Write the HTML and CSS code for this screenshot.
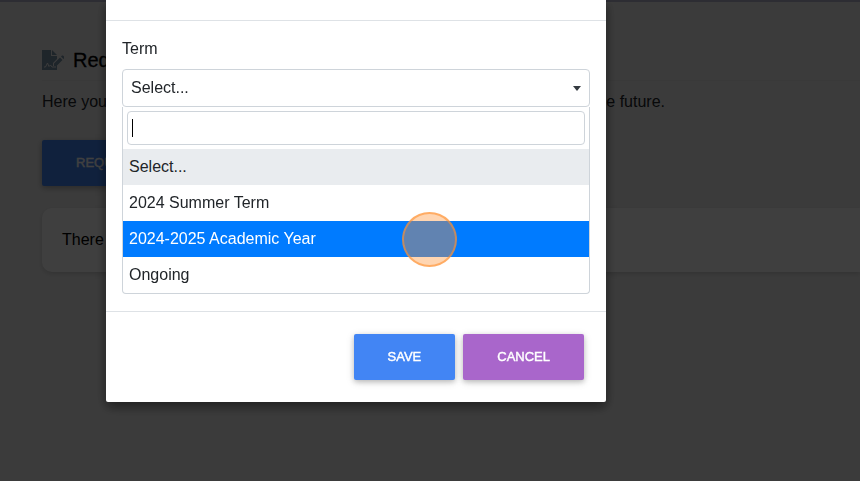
FILE: index.html
```
<!DOCTYPE html>
<html lang="en">
<head>
<meta charset="utf-8">
<meta name="viewport" content="width=device-width, initial-scale=1.0">
<title>Requests</title>
<link rel="stylesheet" href="styles.css">
</head>
<body>
<main class="page">
  <h1 class="page-title">
    <svg class="title-icon" viewBox="0 0 22 20" aria-hidden="true">
      <path fill="currentColor" d="M0 0h9v6h6v3l-4 4v3h3l1-1v5H0z"/>
      <path fill="currentColor" d="M10 0l5 5h-5z"/>
      <path fill="currentColor" d="M12 13.500l6-6 2.500 2.500-6 6H12zM19 6.500l1-1h1l1.500 1.500v1l-1 1z"/>
      <path class="signature" d="M2 17h1.500l2-4 1.500 3.500 1.500-1.500 1.500 2h4"/>
    </svg>
    Req
  </h1>
  <p class="intro"><span>Here you</span> <span>e future.</span></p>
  <button class="btn btn-blue btn-page" type="button">REQU</button>
  <section class="card">There</section>
</main>
<div class="backdrop">
  <form class="modal" role="dialog" aria-label="Term">
    <div class="modal-header"></div>
    <div class="modal-body">
      <label for="term">Term</label>
      <div class="picker">
        <button class="picker-toggle" id="term" type="button">Select...<span class="caret"></span></button>
        <div class="dropdown">
          <div class="search"><input type="text" aria-label="Search terms" autofocus><span class="text-cursor"></span></div>
          <ul class="options" role="listbox">
            <li class="selected" role="option">Select...</li>
            <li role="option">2024 Summer Term</li>
            <li class="active" role="option">2024-2025 Academic Year<span class="click-mark"></span></li>
            <li role="option">Ongoing</li>
          </ul>
        </div>
      </div>
    </div>
    <div class="modal-footer">
      <button class="btn btn-blue" type="button">SAVE</button>
      <button class="btn btn-purple" type="button">CANCEL</button>
    </div>
  </form>
</div>
</body>
</html>
```
FILE: styles.css
```
* {
  box-sizing: border-box;
}

body {
  margin: 0;
  font: 16px/24px "Liberation Sans", Arial, sans-serif;
  color: #212529;
  background: #ececec;
  overflow: hidden;
}

button, input {
  font: inherit;
}

/* page behind the modal */
.page {
  min-height: 100vh;
  padding: 40px 0 0 42px;
  border-top: 2px solid #b4b4cc;
}

.page-title {
  display: flex;
  align-items: center;
  gap: 9px;
  height: 39px;
  margin: 0 0 9px;
  padding-bottom: 2px;
  border-bottom: 1px solid #e4e4e4;
  font-size: 20px;
  font-weight: 400;
  color: #000;
  -webkit-text-stroke: 0.3px currentColor;
}

.title-icon {
  width: 22px;
  height: 20px;
  color: #7892a6;
  -webkit-text-stroke: 0;
}

.signature {
  fill: none;
  stroke: #ececec;
  stroke-width: 1;
}

.intro {
  display: flex;
  justify-content: space-between;
  width: 623px;
  margin: 0 0 26px;
}

.btn {
  height: 46px;
  padding: 0 34px;
  border: 0;
  border-radius: 2px;
  color: #fff;
  font-size: 13px;
  font-weight: 400;
  -webkit-text-stroke: 0.4px currentColor;
  box-shadow: 0 2px 5px rgba(0, 0, 0, 0.2), 0 2px 10px rgba(0, 0, 0, 0.12);
}

.btn-blue {
  background: #4285f4;
}

.btn-purple {
  background: #a966cb;
}

.btn-page {
  display: block;
}

.card {
  margin-top: 22px;
  padding: 20px;
  border-radius: 10px 0 0 10px;
  background: #fcfcfc;
  box-shadow: 0 2px 5px rgba(0, 0, 0, 0.15);
  color: #000;
}

/* modal */
.backdrop {
  position: fixed;
  inset: 0;
  background: rgba(0, 0, 0, 0.75);
}

.modal {
  width: 500px;
  max-width: 100%;
  margin-left: 106px;
  border-radius: 0 0 2px 2px;
  background: #fff;
  box-shadow: 0 5px 11px rgba(0, 0, 0, 0.3), 0 4px 15px rgba(0, 0, 0, 0.25);
}

.modal-header {
  height: 21px;
  border-bottom: 1px solid #dee2e6;
}

.modal-body {
  padding: 16px 16px 17px;
}

.modal-body label {
  display: block;
  margin-bottom: 8px;
}

.picker-toggle {
  display: flex;
  align-items: center;
  justify-content: space-between;
  width: 100%;
  height: 38px;
  padding: 0 8px;
  border: 1px solid #ced4da;
  border-radius: 4px;
  background: #fff;
  color: inherit;
}

.caret {
  border: 4px solid transparent;
  border-top: 5px solid #343a40;
  border-bottom: 0;
}

.dropdown {
  border: 1px solid #ced4da;
  border-top: 0;
  border-radius: 0 0 4px 4px;
}

.search {
  position: relative;
  padding: 4px;
}

.search input {
  display: block;
  width: 100%;
  height: 34px;
  padding: 4px;
  border: 1px solid #ced4da;
  border-radius: 4px;
  outline: 0;
  caret-color: transparent;
}

.text-cursor {
  position: absolute;
  top: 12px;
  left: 9px;
  width: 1px;
  height: 18px;
  background: #000;
}

.options {
  margin: 0;
  padding: 0;
  list-style: none;
}

.options li {
  position: relative;
  padding: 6px;
}

.options .selected {
  background: #e9ecef;
}

.options .active {
  background: #007bff;
  color: #fff;
}

.click-mark {
  position: absolute;
  z-index: 1;
  top: -9px;
  left: 279px;
  width: 55px;
  height: 55px;
  border: 2px solid rgba(255, 145, 50, 0.6);
  border-radius: 50%;
  background: rgba(255, 145, 50, 0.38);
}

.modal-footer {
  display: flex;
  justify-content: flex-end;
  gap: 8px;
  padding: 22px;
  border-top: 1px solid #dee2e6;
}
```
